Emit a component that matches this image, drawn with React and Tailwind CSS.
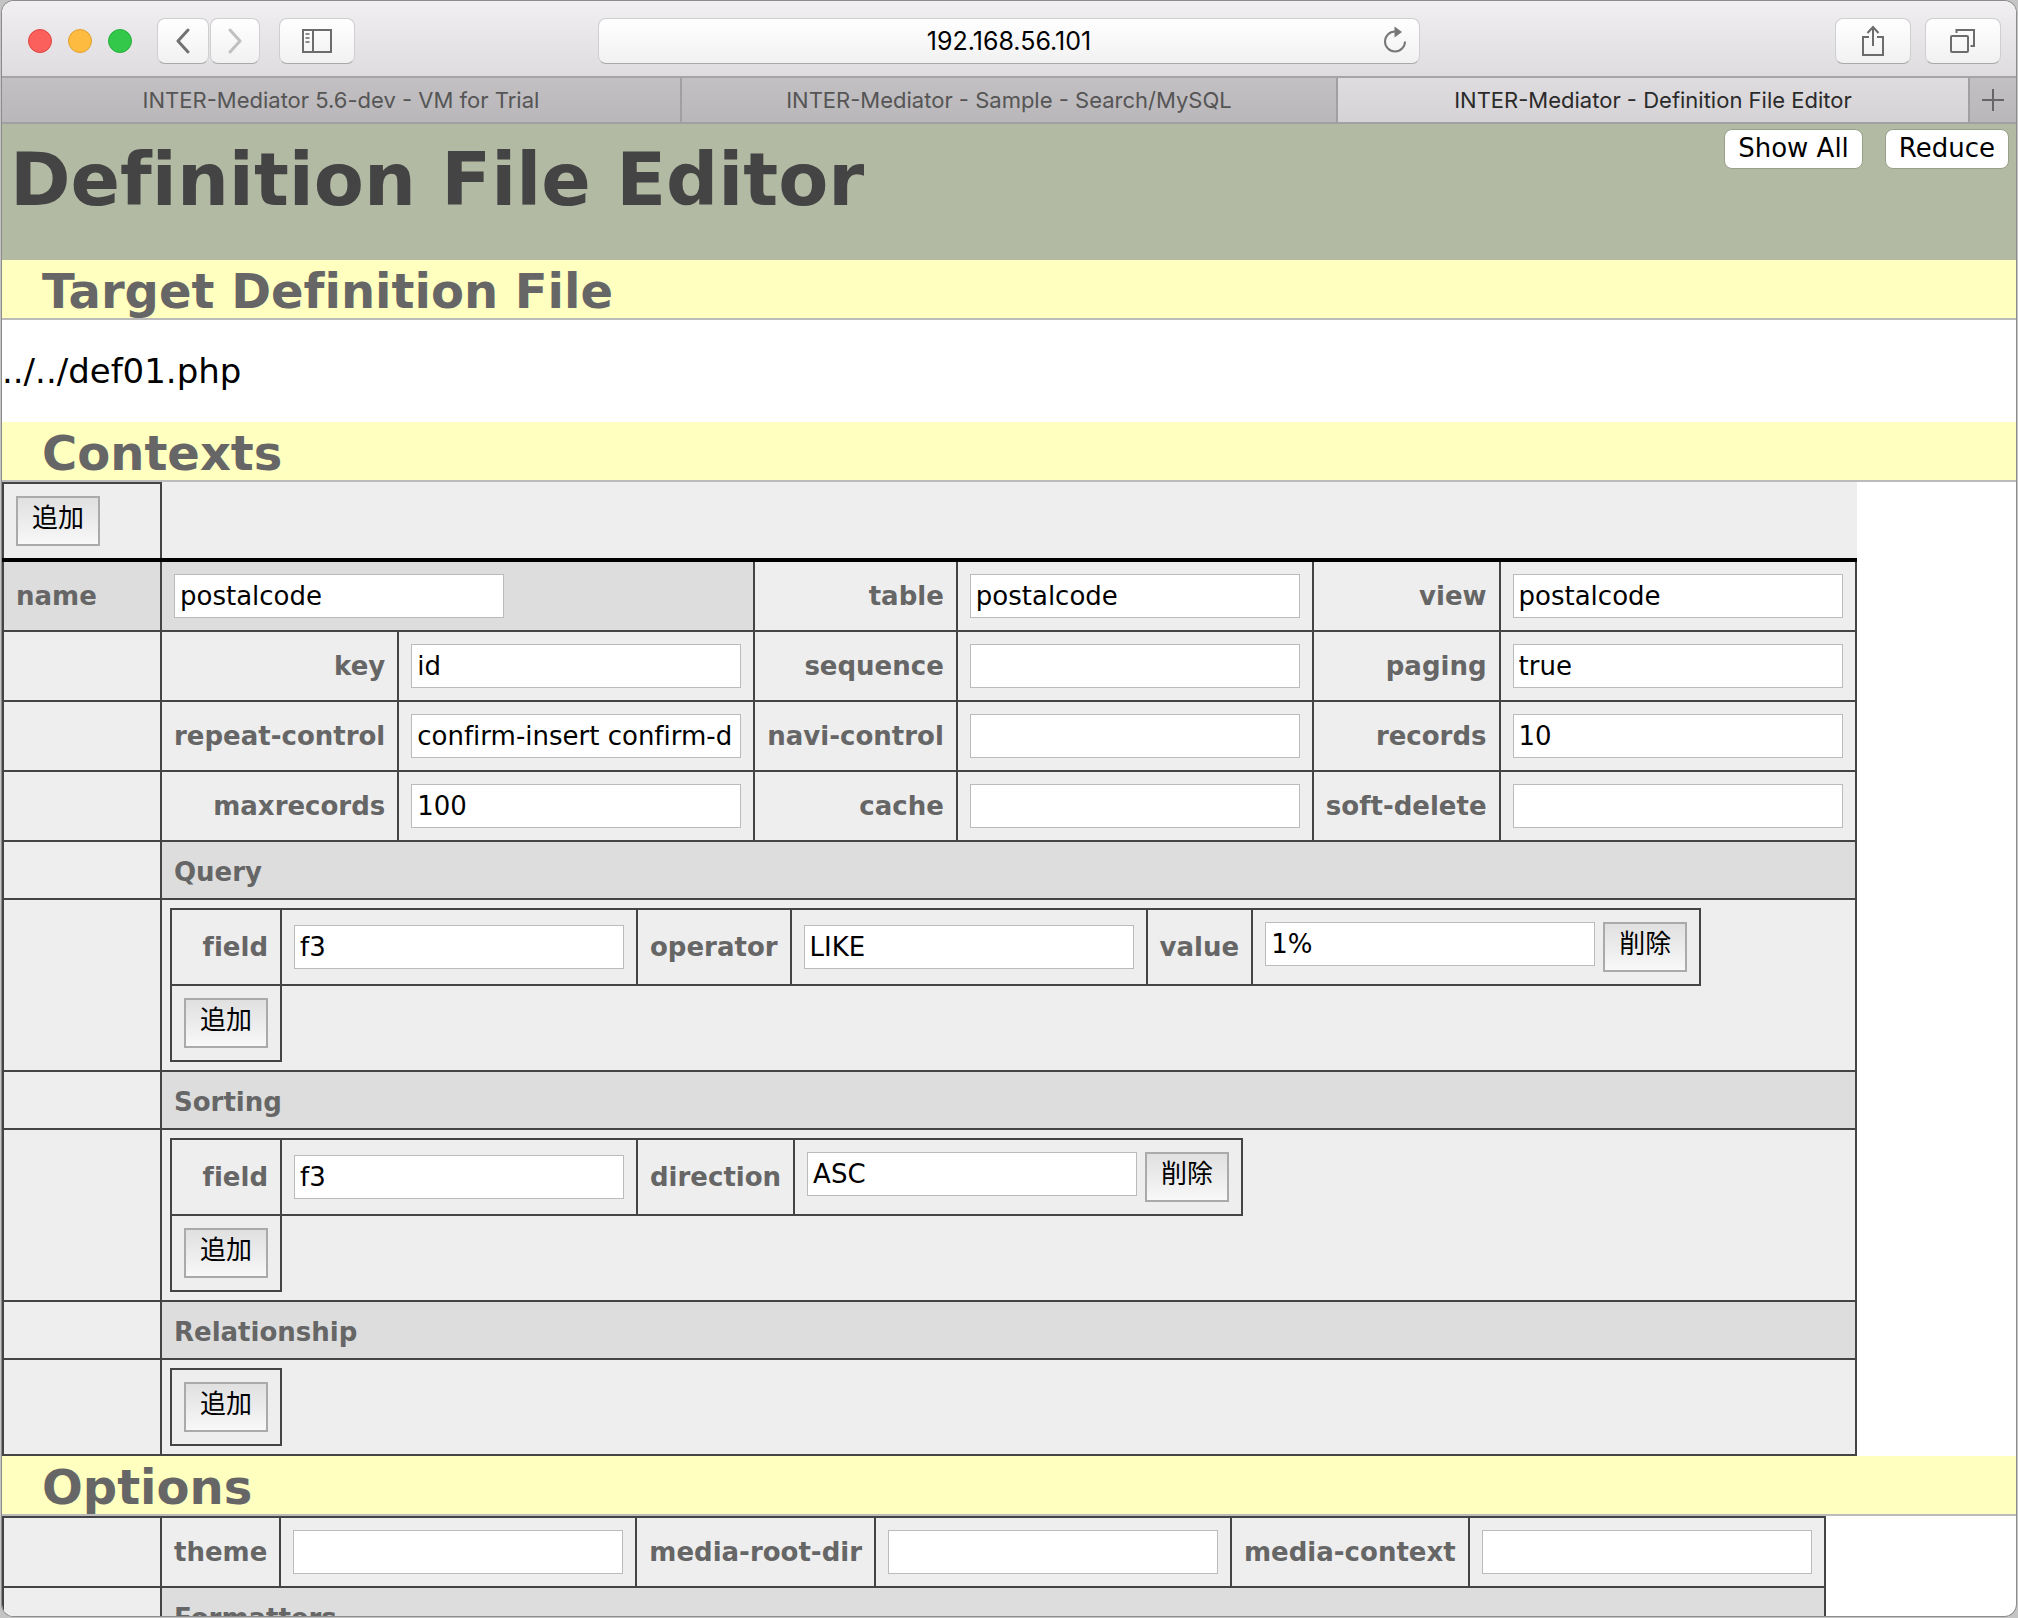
import React from "react";

const toolbarButton =
  "flex h-[46px] items-center justify-center rounded-lg border border-[#cfced0] border-b-[#a9a9aa] bg-gradient-to-b from-white to-[#f1f1f1]";
const label = "border-2 border-[#444] px-3 py-3 text-right font-bold whitespace-nowrap text-[#666]";
const cell = "border-2 border-[#444] p-3";
const section =
  "border-2 border-[#444] bg-[#ddd] px-3 pt-[14px] pb-[10px] text-left font-bold text-[#666]";
const headerButton =
  "h-10 rounded-lg border border-[#98a08b] bg-white px-[13px] pb-0.5 text-black";

function Field({ name, value = "" }) {
  return (
    <input
      type="text"
      aria-label={name}
      defaultValue={value}
      className="block h-11 w-[330px] rounded-none border border-[#bbb] bg-white px-[5px] text-black"
    />
  );
}

function ActionButton({ children }) {
  return (
    <button
      type="button"
      className="block h-[50px] w-[84px] border-2 border-[#aaa] bg-gradient-to-b from-[#e0e0e0] to-[#f8f8f8] pb-[6px] text-center text-black"
    >
      {children}
    </button>
  );
}

function LabeledField({ name, value, removable = false }) {
  return (
    <>
      <th scope="row" className={label}>
        {name}
      </th>
      <td className={cell}>
        {removable ? (
          <div className="flex items-start gap-2">
            <Field name={name} value={value} />
            <ActionButton>削除</ActionButton>
          </div>
        ) : (
          <Field name={name} value={value} />
        )}
      </td>
    </>
  );
}

function NestedTable({ fields }) {
  return (
    <table className="border-collapse">
      <tbody>
        {fields && (
          <tr>
            {fields.map(([name, value], i) => (
              <LabeledField
                key={name}
                name={name}
                value={value}
                removable={i === fields.length - 1}
              />
            ))}
          </tr>
        )}
        <tr>
          <td className={cell}>
            <ActionButton>追加</ActionButton>
          </td>
        </tr>
      </tbody>
    </table>
  );
}

function Section({ title, fields }) {
  return (
    <>
      <tr>
        <td className={cell} />
        <th scope="rowgroup" colSpan={6} className={section}>
          {title}
        </th>
      </tr>
      <tr>
        <td className={cell} />
        <td colSpan={6} className="border-2 border-[#444] p-2">
          <NestedTable fields={fields} />
        </td>
      </tr>
    </>
  );
}

function Heading({ children }) {
  return (
    <h2 className="border-b-2 border-[#bbb] bg-[#ffffc0] pt-1 pl-10 text-5xl leading-[54px] font-bold text-[#666]">
      {children}
    </h2>
  );
}

const contextRows = [
  [["key", "id"], ["sequence", ""], ["paging", "true"]],
  [["repeat-control", "confirm-insert confirm-d"], ["navi-control", ""], ["records", "10"]],
  [["maxrecords", "100"], ["cache", ""], ["soft-delete", ""]],
];

function Toolbar() {
  return (
    <div className="grid h-[77px] shrink-0 grid-cols-[1fr_minmax(0,822px)_1fr] items-center border-b-2 border-[#a5a4a6] bg-gradient-to-b from-[#f1eff1] to-[#dedcdf] pt-1">
      <div className="flex items-center pl-[26px]">
        <div className="flex gap-4">
          <button type="button" aria-label="Close" className="size-6 rounded-full border border-[#e2463f] bg-[#fc605c]" />
          <button type="button" aria-label="Minimize" className="size-6 rounded-full border border-[#e0a033] bg-[#fdbc40]" />
          <button type="button" aria-label="Zoom" className="size-6 rounded-full border border-[#27ae3b] bg-[#34c84a]" />
        </div>
        <div className="ml-[25px] flex gap-px">
          <button type="button" aria-label="Back" className={toolbarButton + " w-[52px]"}>
            <svg width="16" height="26" viewBox="0 0 16 26" fill="none" stroke="#727272" strokeWidth="3" strokeLinecap="round" strokeLinejoin="round">
              <path d="M13 2 3 13 13 24" />
            </svg>
          </button>
          <button type="button" aria-label="Forward" className={toolbarButton + " w-[50px]"}>
            <svg width="16" height="26" viewBox="0 0 16 26" fill="none" stroke="#c0c0c0" strokeWidth="3" strokeLinecap="round" strokeLinejoin="round">
              <path d="M3 2 13 13 3 24" />
            </svg>
          </button>
        </div>
        <button type="button" aria-label="Sidebar" className={toolbarButton + " ml-[19px] w-[76px]"}>
          <svg width="32" height="26" viewBox="0 0 32 26" fill="none" stroke="#6c6c6c" strokeWidth="2">
            <rect x="2" y="2" width="28" height="22" />
            <path d="M12 2v22" />
            <path d="M4.500 6h4M4.500 10h4M4.500 14h4" stroke="#8a8a8a" />
          </svg>
        </button>
      </div>
      <div className="relative">
        <input
          type="text"
          aria-label="Address"
          defaultValue="192.168.56.101"
          className="block h-[46px] w-full rounded-lg border border-[#cfced0] border-b-[#a9a9aa] bg-gradient-to-b from-white to-[#f1f1f1] px-12 text-center text-[25px] text-black"
        />
        <button type="button" aria-label="Reload" className="absolute top-2 right-3">
          <svg width="26" height="28" viewBox="0 0 26 28" fill="none" stroke="#777" strokeWidth="2">
            <path d="M13 5.500a10 10 0 1 0 10 10" />
            <path d="M12.500 0.500 20 6l-7.500 5.500z" fill="#777" stroke="none" />
          </svg>
        </button>
      </div>
      <div className="flex justify-end gap-[14px] pr-[15px]">
        <button type="button" aria-label="Share" className={toolbarButton + " w-[76px]"}>
          <svg width="26" height="34" viewBox="0 0 26 34" fill="none" stroke="#6c6c6c" strokeWidth="2">
            <path d="M9 13H3v18h20V13h-6" />
            <path d="M13 22V3M7.500 9 13 3l5.500 6" />
          </svg>
        </button>
        <button type="button" aria-label="Show tabs" className={toolbarButton + " w-[76px]"}>
          <svg width="28" height="28" viewBox="0 0 28 28" fill="none" stroke="#6c6c6c" strokeWidth="2">
            <rect x="2" y="9" width="17" height="16" rx="1" />
            <path d="M7.500 6V3H25v16h-3.500" />
          </svg>
        </button>
      </div>
    </div>
  );
}

function Tabs() {
  const idle =
    "min-w-0 basis-0 truncate border-r-2 border-[#a09fa2] bg-gradient-to-b from-[#c2c0c3] to-[#b9b7ba] text-[#555]";
  return (
    <div className="flex h-[46px] shrink-0 border-b-2 border-[#a09fa2] text-[22px]">
      <button type="button" className={idle + " grow-[680]"}>
        INTER-Mediator 5.6-dev - VM for Trial
      </button>
      <button type="button" className={idle + " grow-[656]"}>
        INTER-Mediator - Sample - Search/MySQL
      </button>
      <button
        type="button"
        className="min-w-0 grow-[632] basis-0 truncate border-r-2 border-[#a09fa2] bg-gradient-to-b from-[#dedcdf] to-[#d5d3d6] text-[#2a2a2a]"
      >
        INTER-Mediator - Definition File Editor
      </button>
      <button
        type="button"
        aria-label="New tab"
        className="flex w-[46px] items-center justify-center bg-gradient-to-b from-[#c2c0c3] to-[#b9b7ba]"
      >
        <svg width="22" height="22" viewBox="0 0 22 22" stroke="#666" strokeWidth="2">
          <path d="M11 0v22M0 11h22" />
        </svg>
      </button>
    </div>
  );
}

export default function App() {
  return (
    <div className="h-screen overflow-hidden bg-[#c4c4c4] px-0.5 pt-px pb-0.5">
      <div className="flex h-full flex-col overflow-hidden rounded-xl bg-white font-['Inter',sans-serif] shadow-[0_0_0_1px_#8c8c8c]">
        <Toolbar />
        <Tabs />
        <main className="min-h-0 flex-1 overflow-hidden font-['DejaVu_Sans','Noto_Sans_CJK_JP',sans-serif] text-[26px] leading-8 [font-variant-ligatures:none]">
          <header className="flex h-[136px] items-start justify-between bg-[#b2baa3] pl-2">
            <h1 className="pt-3 text-[73px] leading-[88px] font-bold text-[#444]">
              Definition File Editor
            </h1>
            <div className="flex gap-[22px] pt-[5px] pr-[7px]">
              <button type="button" className={headerButton}>
                Show All
              </button>
              <button type="button" className={headerButton}>
                Reduce
              </button>
            </div>
          </header>

          <Heading>Target Definition File</Heading>
          <p className="py-8 text-[34px] leading-[38px] text-black">../../def01.php</p>

          <Heading>Contexts</Heading>
          <table className="border-collapse bg-[#eee]">
            <tbody>
              <tr>
                <td className="w-[158px] border-2 border-b-4 border-[#444] border-b-black p-3">
                  <ActionButton>追加</ActionButton>
                </td>
                <td colSpan={6} className="border-b-4 border-b-black" />
              </tr>
              <tr>
                <th scope="row" className="border-2 border-t-4 border-[#444] border-t-black bg-[#ddd] p-3 text-left font-bold text-[#666]">
                  name
                </th>
                <td colSpan={2} className="border-2 border-t-4 border-[#444] border-t-black bg-[#ddd] p-3">
                  <Field name="name" value="postalcode" />
                </td>
                <LabeledField name="table" value="postalcode" />
                <LabeledField name="view" value="postalcode" />
              </tr>
              {contextRows.map((row) => (
                <tr key={row[0][0]}>
                  <td className={cell} />
                  {row.map(([name, value]) => (
                    <LabeledField key={name} name={name} value={value} />
                  ))}
                </tr>
              ))}
              <Section title="Query" fields={[["field", "f3"], ["operator", "LIKE"], ["value", "1%"]]} />
              <Section title="Sorting" fields={[["field", "f3"], ["direction", "ASC"]]} />
              <Section title="Relationship" />
            </tbody>
          </table>

          <Heading>Options</Heading>
          <table className="border-collapse bg-[#eee]">
            <tbody>
              <tr>
                <td className="w-[158px] border-2 border-[#444] p-3" />
                <LabeledField name="theme" />
                <LabeledField name="media-root-dir" />
                <LabeledField name="media-context" />
              </tr>
              <tr>
                <td className={cell} />
                <th scope="rowgroup" colSpan={6} className={section}>
                  Formatters
                </th>
              </tr>
            </tbody>
          </table>
        </main>
      </div>
    </div>
  );
}
